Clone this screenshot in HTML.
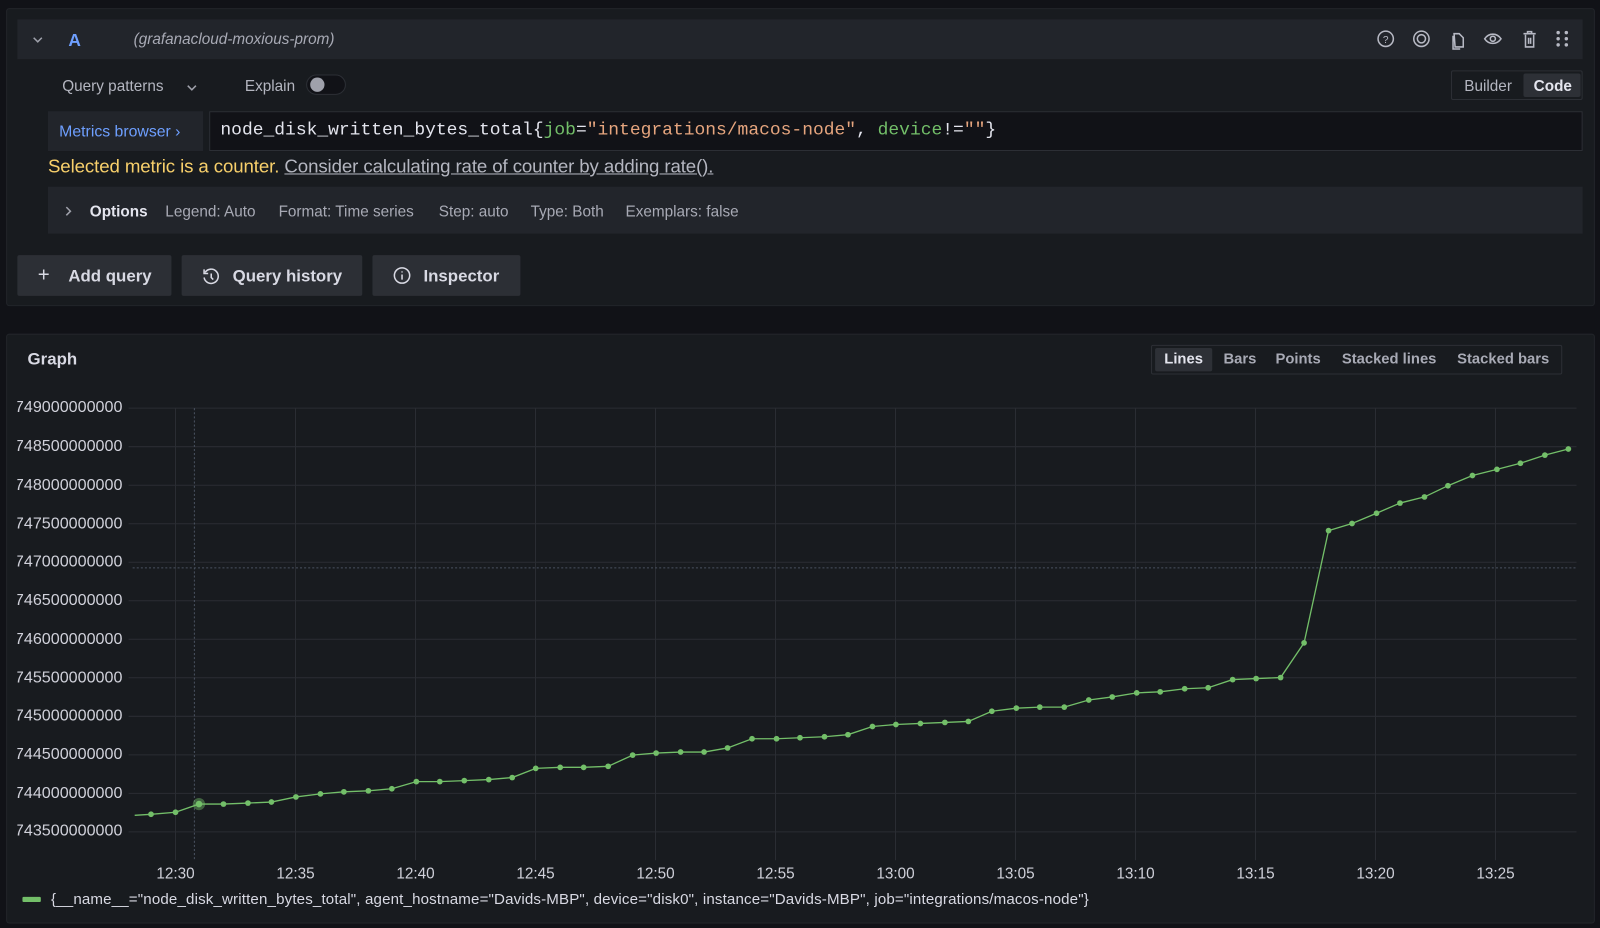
<!DOCTYPE html>
<html><head><meta charset="utf-8">
<style>
*{box-sizing:border-box;margin:0;padding:0}
html,body{width:1600px;height:927px;overflow:hidden;background:#111217}
#w{position:absolute;left:0;top:0;width:1568px;height:909px;transform:scale(1.0204);transform-origin:0 0;font-family:"Liberation Sans",sans-serif;color:#ccccdc}
.a{position:absolute}
.t{position:absolute;white-space:nowrap;line-height:1}
.btn{position:absolute;top:250px;height:40px;background:#2c2f35;border-radius:2px;font-size:16.5px;font-weight:bold;color:#d8d9e3}
.btn span{position:absolute;top:12px}
</style></head><body><div id="w">
<!-- top panel -->
<div class="a" style="left:6px;top:8px;width:1557px;height:292px;background:#181b1f;border:1px solid #22252a;border-radius:3px"></div>
<div class="a" style="left:17px;top:19px;width:1534px;height:39px;background:#22252b"></div>
<svg class="a" style="left:31px;top:34px" width="12" height="10"><path d="M2 3l4 4 4-4" stroke="#9fa1ab" stroke-width="1.5" fill="none"/></svg>
<div class="t" style="left:67px;top:31px;font-size:17px;color:#6e9fff;font-weight:bold">A</div>
<div class="t" style="left:131px;top:31px;font-size:15px;font-style:italic;color:#a8aab5">(grafanacloud-moxious-prom)</div>
<svg class="a" style="left:1345px;top:28px" width="200" height="22" fill="none" stroke="#b7b9c4" stroke-width="1.5">
<circle cx="13" cy="10" r="7.5"/><text x="13" y="14" font-size="10" fill="#b7b9c4" stroke="none" text-anchor="middle" font-family="Liberation Sans">?</text>
<circle cx="48" cy="10" r="7.5"/><circle cx="48" cy="10" r="4"/>
<path d="M80 5h5l4 4v9h-8zM79 7v13h7"/>
<path d="M110 10c4-6 12-6 16 0c-4 6-12 6-16 0z"/><circle cx="118" cy="10" r="2.5"/>
<path d="M148 5h12M152 5v-2h4v2M150 6v12h8v-12M153 9v6M155 9v6"/>
<g fill="#b7b9c4" stroke="none"><circle cx="182" cy="4" r="1.7"/><circle cx="190" cy="4" r="1.7"/><circle cx="182" cy="10" r="1.7"/><circle cx="190" cy="10" r="1.7"/><circle cx="182" cy="16" r="1.7"/><circle cx="190" cy="16" r="1.7"/></g>
</svg>
<div class="t" style="left:61px;top:77px;font-size:15px;color:#b4b6c0">Query patterns</div>
<svg class="a" style="left:182px;top:81px" width="12" height="10"><path d="M2 3l4 4 4-4" stroke="#9fa1ab" stroke-width="1.5" fill="none"/></svg>
<div class="t" style="left:240px;top:77px;font-size:15px;color:#b4b6c0">Explain</div>
<div class="a" style="left:300px;top:73px;width:39px;height:20px;border-radius:10px;background:#111217;border:1px solid #2c2f35"></div>
<div class="a" style="left:304px;top:76px;width:14px;height:14px;border-radius:7px;background:#9fa1ab"></div>
<div class="a" style="left:1422px;top:69px;width:129px;height:29px;border:1px solid #2c2f35;border-radius:2px"></div>
<div class="a" style="left:1493px;top:72px;width:56px;height:23px;background:#2d3036;border-radius:2px"></div>
<div class="t" style="left:1435px;top:77px;font-size:15px;color:#b4b6c0">Builder</div>
<div class="t" style="left:1503px;top:77px;font-size:15px;font-weight:bold;color:#e4e5ee">Code</div>
<div class="a" style="left:47px;top:109px;width:152px;height:39px;background:#22252b"></div>
<div class="t" style="left:58px;top:122px;font-size:15.5px;color:#6e9fff">Metrics browser ›</div>
<div class="a" style="left:205px;top:109px;width:1346px;height:39px;background:#111217;border:1px solid #2c2f35"></div>
<div class="t" style="left:216px;top:120px;font-size:17.6px;font-family:'Liberation Mono',monospace;color:#e4e5ee">node_disk_written_bytes_total{<span style="color:#73bf69">job</span>=<span style="color:#e6a57e">"integrations/macos-node"</span>, <span style="color:#73bf69">device</span>!=<span style="color:#e6a57e">""</span>}</div>
<div class="t" style="left:47px;top:154px;font-size:18.3px;color:#f8d06b;letter-spacing:-0.1px">Selected metric is a counter. <span style="color:#b4b6c0;text-decoration:underline">Consider calculating rate of counter by adding rate().</span></div>
<div class="a" style="left:47px;top:183px;width:1504px;height:46px;background:#22252b"></div>
<svg class="a" style="left:62px;top:201px" width="10" height="12"><path d="M3 2l4 4-4 4" stroke="#9fa1ab" stroke-width="1.5" fill="none"/></svg>
<div class="t" style="left:88px;top:200px;font-size:15px;color:#e4e5ee;font-weight:bold">Options</div>
<div class="t" style="left:162px;top:200px;font-size:15px;color:#a8aab5">Legend: Auto</div>
<div class="t" style="left:273px;top:200px;font-size:15px;color:#a8aab5">Format: Time series</div>
<div class="t" style="left:430px;top:200px;font-size:15px;color:#a8aab5">Step: auto</div>
<div class="t" style="left:520px;top:200px;font-size:15px;color:#a8aab5">Type: Both</div>
<div class="t" style="left:613px;top:200px;font-size:15px;color:#a8aab5">Exemplars: false</div>
<div class="btn" style="left:17px;width:151px"><span style="left:20px;font-weight:normal;font-size:20px;top:9px">+</span><span style="left:50px">Add query</span></div>
<div class="btn" style="left:178px;width:177px"><svg class="a" style="left:20px;top:12px" width="18" height="18" fill="none" stroke="#d8d9e3" stroke-width="1.5"><path d="M3 5A7 7 0 1 1 2 10"/><path d="M2 2v4h4"/><path d="M9 6v4l2 2"/></svg><span style="left:50px">Query history</span></div>
<div class="btn" style="left:365px;width:145px"><svg class="a" style="left:20px;top:11px" width="18" height="18" fill="none" stroke="#d8d9e3" stroke-width="1.5"><circle cx="9" cy="9" r="7.5"/><path d="M9 8v5M9 5v1"/></svg><span style="left:50px">Inspector</span></div>

<!-- graph panel -->
<div class="a" style="left:6px;top:327px;width:1557px;height:578px;background:#181b1f;border:1px solid #22252a;border-radius:3px"></div>
<div class="t" style="left:27px;top:344px;font-size:16.5px;font-weight:bold;color:#d8d9e3">Graph</div>
<div class="a" style="left:1128px;top:338px;width:403px;height:29px;border:1px solid #2c2f35;border-radius:2px"></div>
<div class="a" style="left:1132px;top:341px;width:56px;height:23px;background:#2d3036;border-radius:2px"></div>
<div class="t" style="left:1141px;top:345px;font-size:14.5px;font-weight:bold;color:#e4e5ee">Lines</div>
<div class="t" style="left:1199px;top:345px;font-size:14.5px;font-weight:bold;color:#a8aab5">Bars</div>
<div class="t" style="left:1250px;top:345px;font-size:14.5px;font-weight:bold;color:#a8aab5">Points</div>
<div class="t" style="left:1315px;top:345px;font-size:14.5px;font-weight:bold;color:#a8aab5">Stacked lines</div>
<div class="t" style="left:1428px;top:345px;font-size:14.5px;font-weight:bold;color:#a8aab5">Stacked bars</div>

<svg class="a" style="left:0;top:0" width="1568" height="909" font-family="Liberation Sans" font-size="14.5" fill="#ccccdc">
<defs><clipPath id="yc"><rect x="17" y="380" width="120" height="460"/></clipPath></defs>
<g stroke="#2a2d33" stroke-width="1">
<path d="M126 400H1545M126 437.75H1545M126 475.5H1545M126 513.25H1545M126 551H1545M126 588.75H1545M126 626.5H1545M126 664.25H1545M126 702H1545M126 739.75H1545M126 777.5H1545M126 815.25H1545"/>
<path d="M172 400V843M289.6 400V843M407.2 400V843M524.8 400V843M642.4 400V843M760 400V843M877.6 400V843M995.2 400V843M1112.8 400V843M1230.4 400V843M1348 400V843M1465.6 400V843"/>
</g>
<g stroke="#4a5260" stroke-dasharray="2 2"><path d="M130 556.5H1545M190.5 400V843"/></g>
<g text-anchor="end" clip-path="url(#yc)" font-size="15.8" fill="#d0d1da">
<text x="120" y="404">749000000000</text><text x="120" y="442">748500000000</text><text x="120" y="480">748000000000</text><text x="120" y="518">747500000000</text><text x="120" y="555">747000000000</text><text x="120" y="593">746500000000</text><text x="120" y="631">746000000000</text><text x="120" y="669">745500000000</text><text x="120" y="706">745000000000</text><text x="120" y="744">744500000000</text><text x="120" y="782">744000000000</text><text x="120" y="819">743500000000</text>
</g>
<g text-anchor="middle" font-size="15" fill="#d0d1da">
<text x="172" y="861">12:30</text><text x="289.6" y="861">12:35</text><text x="407.2" y="861">12:40</text><text x="524.8" y="861">12:45</text><text x="642.4" y="861">12:50</text><text x="760" y="861">12:55</text><text x="877.6" y="861">13:00</text><text x="995.2" y="861">13:05</text><text x="1112.8" y="861">13:10</text><text x="1230.4" y="861">13:15</text><text x="1348" y="861">13:20</text><text x="1465.6" y="861">13:25</text>
</g>
<polyline fill="none" stroke="#73bf69" stroke-width="1.3" points="132,799 148,798 172,796 195,788 219,788 243,787 266,786 290,781 314,778 337,776 361,775 384,773 408,766 431,766 455,765 479,764 502,762 525,753 549,752 572,752 596,751 620,740 643,738 667,737 690,737 713,733 737,724 761,724 784,723 808,722 831,720 855,712 878,710 902,709 926,708 949,707 972,697 996,694 1019,693 1043,693 1067,686 1090,683 1114,679 1137,678 1161,675 1184,674 1208,666 1231,665 1255,664 1278,630 1302,520 1325,513 1349,503 1372,493 1396,487 1419,476 1443,466 1467,460 1490,454 1514,446 1537,440"/>
<g fill="#73bf69">
<circle cx="195" cy="788" r="6" opacity="0.45"/>
<circle cx="148" cy="798" r="2.8"/><circle cx="172" cy="796" r="2.8"/><circle cx="195" cy="788" r="3.2"/><circle cx="219" cy="788" r="2.8"/><circle cx="243" cy="787" r="2.8"/><circle cx="266" cy="786" r="2.8"/><circle cx="290" cy="781" r="2.8"/><circle cx="314" cy="778" r="2.8"/><circle cx="337" cy="776" r="2.8"/><circle cx="361" cy="775" r="2.8"/><circle cx="384" cy="773" r="2.8"/><circle cx="408" cy="766" r="2.8"/><circle cx="431" cy="766" r="2.8"/><circle cx="455" cy="765" r="2.8"/><circle cx="479" cy="764" r="2.8"/><circle cx="502" cy="762" r="2.8"/><circle cx="525" cy="753" r="2.8"/><circle cx="549" cy="752" r="2.8"/><circle cx="572" cy="752" r="2.8"/><circle cx="596" cy="751" r="2.8"/><circle cx="620" cy="740" r="2.8"/><circle cx="643" cy="738" r="2.8"/><circle cx="667" cy="737" r="2.8"/><circle cx="690" cy="737" r="2.8"/><circle cx="713" cy="733" r="2.8"/><circle cx="737" cy="724" r="2.8"/><circle cx="761" cy="724" r="2.8"/><circle cx="784" cy="723" r="2.8"/><circle cx="808" cy="722" r="2.8"/><circle cx="831" cy="720" r="2.8"/><circle cx="855" cy="712" r="2.8"/><circle cx="878" cy="710" r="2.8"/><circle cx="902" cy="709" r="2.8"/><circle cx="926" cy="708" r="2.8"/><circle cx="949" cy="707" r="2.8"/><circle cx="972" cy="697" r="2.8"/><circle cx="996" cy="694" r="2.8"/><circle cx="1019" cy="693" r="2.8"/><circle cx="1043" cy="693" r="2.8"/><circle cx="1067" cy="686" r="2.8"/><circle cx="1090" cy="683" r="2.8"/><circle cx="1114" cy="679" r="2.8"/><circle cx="1137" cy="678" r="2.8"/><circle cx="1161" cy="675" r="2.8"/><circle cx="1184" cy="674" r="2.8"/><circle cx="1208" cy="666" r="2.8"/><circle cx="1231" cy="665" r="2.8"/><circle cx="1255" cy="664" r="2.8"/><circle cx="1278" cy="630" r="2.8"/><circle cx="1302" cy="520" r="2.8"/><circle cx="1325" cy="513" r="2.8"/><circle cx="1349" cy="503" r="2.8"/><circle cx="1372" cy="493" r="2.8"/><circle cx="1396" cy="487" r="2.8"/><circle cx="1419" cy="476" r="2.8"/><circle cx="1443" cy="466" r="2.8"/><circle cx="1467" cy="460" r="2.8"/><circle cx="1490" cy="454" r="2.8"/><circle cx="1514" cy="446" r="2.8"/><circle cx="1537" cy="440" r="2.8"/>
</g>
<rect x="22" y="879" width="18" height="5" rx="1" fill="#73bf69"/>
<text x="50" y="886" font-size="14.8" fill="#d8d9e3" textLength="1017">{__name__="node_disk_written_bytes_total", agent_hostname="Davids-MBP", device="disk0", instance="Davids-MBP", job="integrations/macos-node"}</text>
</svg>
</div></body></html>
